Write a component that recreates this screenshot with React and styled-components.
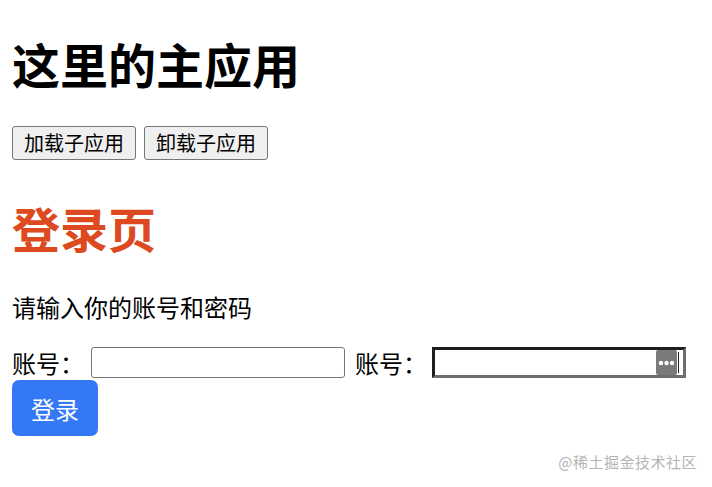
import React from 'react';
import styled, { createGlobalStyle } from 'styled-components';

const GlobalStyle = createGlobalStyle`
  html, body {
    margin: 0;
    padding: 0;
    background: #ffffff;
  }
  body {
    font-family: "Noto Sans CJK SC", "Noto Sans", sans-serif;
    color: #000;
  }
`;

const Page = styled.div`
  position: relative;
  width: 712px;
  height: 487px;
  padding: 0 12px;
  box-sizing: border-box;
  overflow: hidden;
`;

const Title = styled.h1`
  margin: 35px 0 35px;
  font-size: 48px;
  line-height: 56px;
  font-weight: 700;
  color: ${(p) => p.$color || '#000'};
`;

const SubTitle = styled(Title)`
  margin: 39px 0 0;
`;

const ButtonRow = styled.div`
  display: flex;
  gap: 8px;
`;

const PlainButton = styled.button`
  height: 34px;
  padding: 0 11px;
  border: 1px solid #767676;
  border-radius: 3px;
  background: #efefef;
  font-family: inherit;
  font-size: 20px;
  line-height: 32px;
  color: #000;
`;

const Hint = styled.p`
  margin: 35px 0 0;
  font-size: 24px;
  line-height: 34px;
`;

const FormRow = styled.div`
  display: flex;
  align-items: center;
  height: 33px;
  margin-top: 22px;
`;

const Label = styled.label`
  font-size: 24px;
  line-height: 33px;
  width: ${(p) => p.$width}px;
  flex-shrink: 0;
`;

const TextInput = styled.input`
  box-sizing: border-box;
  width: 254px;
  height: 31px;
  margin-right: 10px;
  border: 1px solid #767676;
  border-radius: 3px;
  background: #fff;
`;

const PasswordWrap = styled.div`
  position: relative;
  width: 254px;
  height: 31px;
`;

const PasswordInput = styled.input`
  box-sizing: border-box;
  width: 100%;
  height: 100%;
  border: 3px solid;
  border-color: #1e1e1e #6e6e6e #6e6e6e #1e1e1e;
  background: #fff;
  outline: none;
`;

const KeyBadge = styled.span`
  position: absolute;
  right: 9px;
  top: 3px;
  width: 21px;
  height: 25px;
  border-radius: 2px;
  background: #7a7a7a;
  display: flex;
  align-items: center;
  justify-content: center;
`;

const Caret = styled.span`
  position: absolute;
  right: 7px;
  top: 5px;
  width: 1px;
  height: 21px;
  background: #222;
`;

const LoginButton = styled.button`
  display: block;
  width: 86px;
  height: 56px;
  margin-top: 1px;
  border: none;
  border-radius: 7px;
  background: #3478f6;
  color: #fff;
  font-family: inherit;
  font-size: 24px;
`;

const Watermark = styled.div`
  position: absolute;
  right: 15px;
  bottom: 15px;
  font-size: 15px;
  color: #b4b4b4;
  letter-spacing: 0.5px;
`;

function Dots() {
  return (
    <svg width="17" height="6" viewBox="0 0 17 6">
      <circle cx="3" cy="3" r="2.2" fill="#fff" />
      <circle cx="8.5" cy="3" r="2.2" fill="#fff" />
      <circle cx="14" cy="3" r="2.2" fill="#fff" />
    </svg>
  );
}

export default function App() {
  return (
    <Page>
      <GlobalStyle />
      <Title>这里的主应用</Title>
      <ButtonRow>
        <PlainButton>加载子应用</PlainButton>
        <PlainButton>卸载子应用</PlainButton>
      </ButtonRow>

      <SubTitle $color="#dd4a20">登录页</SubTitle>
      <Hint>请输入你的账号和密码</Hint>

      <FormRow>
        <Label $width={79}>账号：</Label>
        <TextInput type="text" />
        <Label $width={77}>账号：</Label>
        <PasswordWrap>
          <PasswordInput type="password" />
          <KeyBadge>
            <Dots />
          </KeyBadge>
          <Caret />
        </PasswordWrap>
      </FormRow>
      <LoginButton>登录</LoginButton>

      <Watermark>@稀土掘金技术社区</Watermark>
    </Page>
  );
}
